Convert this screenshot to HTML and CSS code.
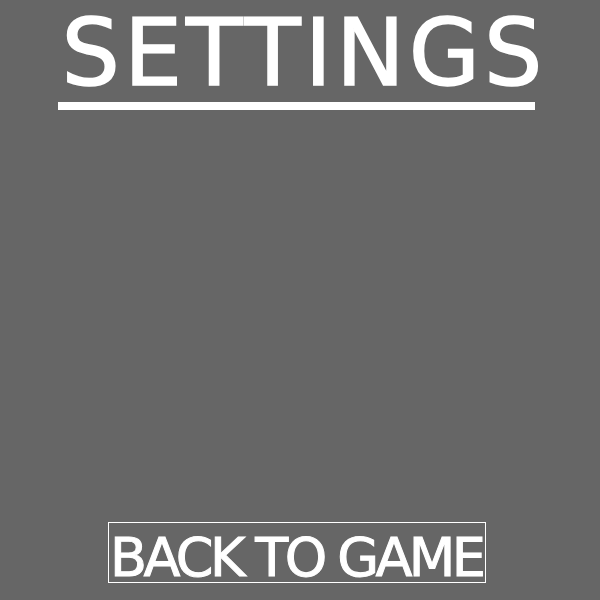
FILE: index.html
```html
<!DOCTYPE html>
<html>
<head>
<meta charset="utf-8">
<link rel="stylesheet" href="styles.css">
</head>
<body>
<div class="screen">
  <div class="title-block">
    <h1 class="title">SETTINGS</h1>
    <div class="title-bar"></div>
  </div>
  <button class="back-btn">BACK TO GAME</button>
</div>
</body>
</html>
```
FILE: styles.css
```css
html, body {
  margin: 0;
  padding: 0;
  background: #666666;
}
.screen {
  width: 600px;
  height: 600px;
  box-sizing: border-box;
  padding: 0 6px 17px 0;
  display: flex;
  flex-direction: column;
  align-items: center;
  justify-content: space-between;
  font-family: "Comic Sans MS", "DejaVu Sans", sans-serif;
  color: #ffffff;
}
.title-block {
  display: flex;
  flex-direction: column;
  align-items: center;
}
.title {
  margin: 0;
  height: 102px;
  font-size: 92px;
  line-height: normal;
  font-weight: normal;
  letter-spacing: 4px;
  padding-left: 14px;
  -webkit-text-stroke: 1.5px #ffffff;
}
.title-bar {
  width: 477px;
  height: 8px;
  background: #ffffff;
}
.back-btn {
  width: 378px;
  height: 61px;
  box-sizing: border-box;
  border: 1px solid #ffffff;
  background: transparent;
  color: #ffffff;
  font-family: inherit;
  font-size: 54px;
  line-height: 44px;
  padding: 13px 0 2px 1px;
  letter-spacing: -3.6px;
  text-align: left;
  white-space: nowrap;
  -webkit-text-stroke: 1px #ffffff;
}
```
